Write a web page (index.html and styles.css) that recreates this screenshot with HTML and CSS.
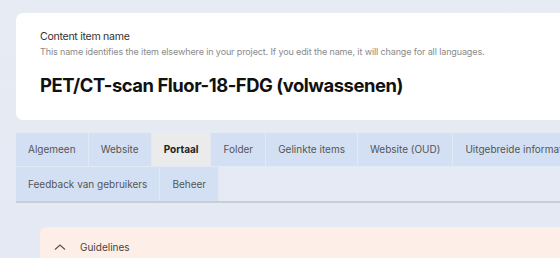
FILE: index.html
```html
<!DOCTYPE html>
<html lang="en">
<head>
  <meta charset="UTF-8" />
  <title>Content item</title>
  <link rel="stylesheet" href="styles.css">
</head>
<body>
  <div class="page">
    <div class="name-card">
      <div class="name-label">Content item name</div>
      <div class="name-hint">This name identifies the item elsewhere in your project. If you edit the name, it will change for all languages.</div>
      <h1 class="name-title">PET/CT-scan Fluor-18-FDG (volwassenen)</h1>
    </div>

    <ul class="tabs">
      <li class="tab">Algemeen</li>
      <li class="tab">Website</li>
      <li class="tab active">Portaal</li>
      <li class="tab">Folder</li>
      <li class="tab">Gelinkte items</li>
      <li class="tab">Website (OUD)</li>
      <li class="tab">Uitgebreide informatie</li>
      <li class="tab">Feedback van gebruikers</li>
      <li class="tab">Beheer</li>
    </ul>

    <div class="guidelines">
      <svg class="chevron" width="12" height="8" viewBox="0 0 12 8">
        <path d="M1 6.5 L6 2 L11 6.5" fill="none" stroke="#555" stroke-width="1.2"/>
      </svg>
      <span>Guidelines</span>
    </div>
  </div>
</body>
</html>
```

FILE: styles.css
```css
body {
  margin: 0;
  font-family: Inter, 'Noto Sans', sans-serif;
  background: linear-gradient(180deg, #e7ebf3 0%, #e4e9f4 100%);
  overflow: hidden;
  height: 258px;
}

.page {
  width: 640px;
  padding: 13px 0 0 16px;
}

.name-card {
  background: #fff;
  border-radius: 7px;
  padding: 17px 24px 24px 24px;
  height: 66px;
}

.name-label {
  font-size: 10.6px;
  letter-spacing: -0.3px;
  color: #333;
  line-height: 14px;
}

.name-hint {
  font-size: 9px;
  letter-spacing: -0.12px;
  color: #8a8a8a;
  line-height: 12px;
  margin-top: 2px;
}

.name-title {
  font-size: 18.4px;
  letter-spacing: -0.45px;
  font-weight: 700;
  color: #111;
  margin: 15px 0 0 0;
  line-height: 24px;
}

.tabs {
  display: flex;
  flex-wrap: wrap;
  list-style: none;
  margin: 13px 0 0 0;
  padding: 0;
  width: 600px;
  border-bottom: 2px solid #c9cdd5;
}

.tab {
  background: #d3e0f3;
  color: #555;
  font-size: 10px;
  height: 34px;
  line-height: 34px;
  padding: 0 12px;
  border-right: 1px solid #e3e9f4;
}

.tab:nth-child(-n+7) {
  border-bottom: 1px solid #e3e9f4;
  height: 33px;
  line-height: 33px;
}

.tab.active {
  background: #ebebeb;
  color: #222;
  font-weight: 700;
}

.guidelines {
  margin: 24px 0 0 24px;
  background: #fdefe7;
  border-radius: 6px 6px 0 0;
  height: 40px;
  display: flex;
  align-items: center;
  padding-left: 14px;
  gap: 14px;
  font-size: 10px;
  color: #444;
}

.chevron {
  display: block;
}
```
